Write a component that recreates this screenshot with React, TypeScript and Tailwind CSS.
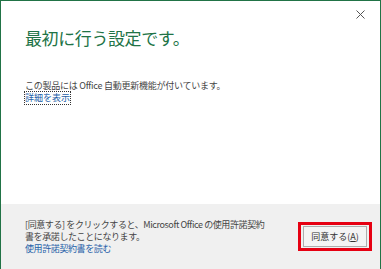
import React from "react";

export default function App() {
  return (
    <div
      className="w-[381px] h-[269px] border-x border-t border-[#217346] flex flex-col bg-white text-[#444444]"
      style={{ fontFamily: '"Noto Sans CJK JP", "Noto Sans", sans-serif' }}
    >
      <div className="relative flex-1 pl-[24px]">
        <div className="absolute top-[9px] right-[15px] w-[9px] h-[9px]">
          <svg width="9" height="9" viewBox="0 0 9 9">
            <path d="M0.5 0.5 L8.5 8.5 M8.5 0.5 L0.5 8.5" stroke="#555" strokeWidth="1" />
          </svg>
        </div>
        <div className="pt-[27px] text-[17px] leading-[20px] tracking-[-0.4px] text-[#217346]">
          最初に行う設定です。
        </div>
        <div className="mt-[32px] text-[9px] leading-[12px] tracking-[-0.25px] whitespace-nowrap">
          この製品には Office 自動更新機能が付いています。
        </div>
        <div className="text-[9px] leading-[12px]">
          <span className="inline-block outline outline-1 outline-dotted outline-[#333] text-[#1e5fa8]">
            詳細を表示
          </span>
        </div>
      </div>
      <div className="h-[65px] bg-[#f0f0f0] flex justify-between pl-[24px] pr-[8px]">
        <div className="pt-[15px] text-[9px] leading-[12px] tracking-[-0.4px] whitespace-nowrap">
          <div>[同意する] をクリックすると、Microsoft Office の使用許諾契約</div>
          <div>書を承諾したことになります。</div>
          <div className="text-[#1e5fa8]">使用許諾契約書を読む</div>
        </div>
        <div className="pt-[18px]">
          <div className="border-[3px] border-[#e60012] px-[2px] py-[1px] bg-[#f0f0f0]">
            <div className="w-[64px] h-[21px] border border-[#adadad] bg-[#f4f4f4] flex items-center justify-center text-[9px] text-[#333]">
              同意する(<span className="underline">A</span>)
            </div>
          </div>
        </div>
      </div>
    </div>
  );
}
